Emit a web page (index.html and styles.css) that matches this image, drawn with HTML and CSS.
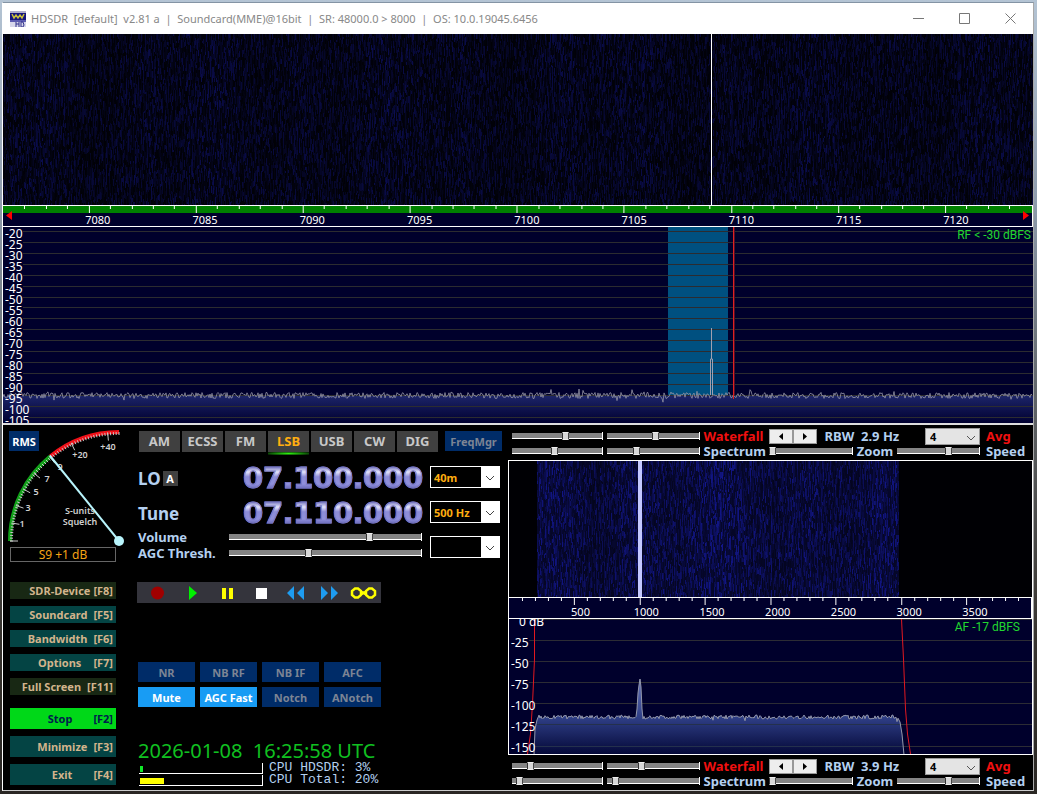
FILE: index.html
```html
<!DOCTYPE html>
<html lang="en">
<head>
<meta charset="utf-8">
<title>HDSDR</title>
<link rel="stylesheet" href="styles.css">
</head>
<body>
<div class="window">
  <header class="titlebar">
    <svg class="app-icon" width="16" height="16" viewBox="0 0 16 16" aria-hidden="true">
      <rect width="16" height="16" fill="#15157c"/><rect width="16" height="2" fill="#b0b0cc"/><rect y="10" width="16" height="6" fill="#d6d6ea"/><path d="M0 9h16v2H0z" fill="#5b5bb0"/>
      <path d="M2 3l2 4 2-3 2 3 2-3 2 3 2-4" fill="none" stroke="#c8c03c" stroke-width="1.5"/><path d="M6 11v5M9 11v5M6 13h3M11 11v5h2l1-2-1-3z" fill="none" stroke="#30308c"/>
    </svg>
    <h1>HDSDR&nbsp; [default]&nbsp; v2.81 a&nbsp; |&nbsp; Soundcard(MME)@16bit&nbsp; |&nbsp; SR: 48000.0 &gt; 8000&nbsp; |&nbsp; OS: 10.0.19045.6456</h1>
    <div class="caption">
      <button aria-label="Minimize window"><svg width="11" height="11" viewBox="0 0 11 11"><path d="M0 5.500h11" stroke="#777"/></svg></button>
      <button aria-label="Maximize window"><svg width="11" height="11" viewBox="0 0 11 11"><path d="M.5.5h10v10H.5z" fill="none" stroke="#777"/></svg></button>
      <button aria-label="Close window"><svg width="11" height="11" viewBox="0 0 11 11"><path d="M.5.5l10 10M10.500.5l-10 10" stroke="#777"/></svg></button>
    </div>
  </header>

  <canvas class="rf-waterfall" id="rfWaterfall" width="1030" height="171"></canvas>

  <div class="rf-scale">
    <svg class="rf-ticks" id="rfTicks" viewBox="0 0 1030 8" preserveAspectRatio="none"></svg>
    <div class="rf-freqs">
      <svg class="edge left" width="6" height="9" viewBox="0 0 6 9"><path d="M6 0v9L0 4.500z" fill="#f00"/></svg>
      <span>7080</span><span>7085</span><span>7090</span><span>7095</span><span>7100</span><span>7105</span><span>7110</span><span>7115</span><span>7120</span>
      <svg class="edge right" width="6" height="9" viewBox="0 0 6 9"><path d="M0 0v9l6-4.500z" fill="#f00"/></svg>
    </div>
  </div>

  <section class="rf-spectrum plot">
    <svg id="rfPlot" viewBox="0 0 1030 196" preserveAspectRatio="none"></svg>
    <div class="db-labels"><span>-20</span><span>-25</span><span>-30</span><span>-35</span><span>-40</span><span>-45</span><span>-50</span><span>-55</span><span>-60</span><span>-65</span><span>-70</span><span>-75</span><span>-80</span><span>-85</span><span>-90</span><span>-95</span><span>-100</span><span>-105</span></div>
    <p class="level">RF &lt; -30 dBFS</p>
  </section>

  <main class="panel">
    <aside class="side">
      <div class="meter">
        <svg id="meter" width="122" height="119" viewBox="0 0 122 119" role="img" aria-label="Signal meter"></svg>
        <button class="rms">RMS</button>
      </div>
      <output class="signal">S9 +1 dB</output>
      <nav class="menu">
        <button class="dark"><span>SDR-Device</span><span>[F8]</span></button>
        <button><span>Soundcard</span><span>[F5]</span></button>
        <button><span>Bandwidth</span><span>[F6]</span></button>
        <button class="mid"><span>Options</span><span>[F7]</span></button>
        <button class="dark"><span>Full Screen</span><span>[F11]</span></button>
      </nav>
      <nav class="menu tall">
        <button class="stop"><span>Stop</span><span>[F2]</span></button>
        <button><span>Minimize</span><span>[F3]</span></button>
        <button class="exit"><span>Exit</span><span>[F4]</span></button>
      </nav>
    </aside>

    <section class="tuner">
      <div class="modes">
        <button>AM</button><button>ECSS</button><button>FM</button><button class="on">LSB</button><button>USB</button><button>CW</button><button>DIG</button>
        <button class="freqmgr">FreqMgr</button>
      </div>
      <div class="freq-row">
        <span class="name">LO<button class="badge">A</button></span>
        <output class="digits" aria-label="LO frequency"><span>0</span><span>7</span><span class="dot">.</span><span>1</span><span>0</span><span>0</span><span class="dot">.</span><span>0</span><span>0</span><span>0</span></output>
        <span class="pick"><select aria-label="Band"><option>40m</option></select><svg width="10" height="6" viewBox="0 0 10 6"><path d="M1 1l4 4 4-4" fill="none" stroke="#444"/></svg></span>
      </div>
      <div class="freq-row">
        <span class="name">Tune</span>
        <output class="digits" aria-label="Tune frequency"><span>0</span><span>7</span><span class="dot">.</span><span>1</span><span>1</span><span>0</span><span class="dot">.</span><span>0</span><span>0</span><span>0</span></output>
        <span class="pick"><select aria-label="Step"><option>500 Hz</option></select><svg width="10" height="6" viewBox="0 0 10 6"><path d="M1 1l4 4 4-4" fill="none" stroke="#444"/></svg></span>
      </div>
      <div class="levels">
        <div class="sliders">
          <label for="vol">Volume</label><input id="vol" type="range" value="74">
          <label for="agc">AGC Thresh.</label><input id="agc" type="range" value="41">
        </div>
        <span class="pick"><select aria-label="Preset"><option></option></select><svg width="10" height="6" viewBox="0 0 10 6"><path d="M1 1l4 4 4-4" fill="none" stroke="#444"/></svg></span>
      </div>
      <div class="transport">
        <button aria-label="Record"><svg width="28" height="20" viewBox="0 0 28 20"><circle cx="13.500" cy="10" r="6.500" fill="#a00000"/></svg></button>
        <button aria-label="Play"><svg width="28" height="20" viewBox="0 0 28 20"><path d="M11 3l8 7-8 7z" fill="#00f000"/></svg></button>
        <button aria-label="Pause"><svg width="28" height="20" viewBox="0 0 28 20"><path d="M9 5h4v11H9zM16 5h4v11h-4z" fill="#ff0"/></svg></button>
        <button aria-label="Stop playback"><svg width="28" height="20" viewBox="0 0 28 20"><path d="M9 5h11v11H9z" fill="#fff"/></svg></button>
        <button aria-label="Rewind"><svg width="28" height="20" viewBox="0 0 28 20"><path d="M13 3v14l-7-7zM23 3v14l-7-7z" fill="#1e9cf0"/></svg></button>
        <button aria-label="Forward"><svg width="28" height="20" viewBox="0 0 28 20"><path d="M5 3v14l7-7zM15 3v14l7-7z" fill="#1e9cf0"/></svg></button>
        <button aria-label="Loop"><svg width="28" height="20" viewBox="0 0 28 20"><path d="M5 5.500h3l3 2.500v4l-3 2.500H5L2 12V8zM19 5.500h3l3 2.500v4l-3 2.500h-3L16 12V8zM11 8.500l5 3M11 11.500l5-3" fill="none" stroke="#ff0" stroke-width="2.500"/></svg></button>
      </div>
      <div class="dsp">
        <button>NR</button><button>NB RF</button><button>NB IF</button><button>AFC</button>
        <button class="on">Mute</button><button class="on">AGC Fast</button><button>Notch</button><button>ANotch</button>
      </div>
      <time class="clock">2026-01-08&nbsp; 16:25:58 UTC</time>
      <div class="cpu"><div class="bar"><i class="own"></i></div><span>CPU HDSDR: 3%</span></div>
      <div class="cpu"><div class="bar"><i class="total"></i></div><span>CPU Total: 20%</span></div>
    </section>

    <section class="audio">
      <div class="view-controls">
        <input type="range" aria-label="RF waterfall low" value="60"><input type="range" aria-label="RF waterfall high" value="53"><span class="red">Waterfall</span>
        <div class="rbw"><button aria-label="Narrower"><svg width="4" height="7" viewBox="0 0 4 7"><path d="M4 0v7L0 3.500z"/></svg></button><button aria-label="Wider"><svg width="4" height="7" viewBox="0 0 4 7"><path d="M0 0v7l4-3.500z"/></svg></button><span>RBW&nbsp; 2.9 Hz</span></div>
        <span class="avg"><select id="avg1"><option>4</option></select><svg width="10" height="6" viewBox="0 0 10 6"><path d="M1 1l4 4 4-4" fill="none" stroke="#555"/></svg></span><label class="red" for="avg1">Avg</label>
        <input type="range" aria-label="RF spectrum low" value="47"><input type="range" aria-label="RF spectrum high" value="31"><span>Spectrum</span>
        <input id="zoom1" type="range" value="0"><label for="zoom1">Zoom</label><input id="speed1" type="range" value="64"><label for="speed1">Speed</label>
      </div>
      <div class="af-view">
        <canvas class="af-waterfall" id="afWaterfall" width="523" height="136"></canvas>
        <div class="af-scale">
          <svg id="afTicks" viewBox="0 0 523 8" preserveAspectRatio="none"></svg>
          <div class="af-freqs"><span>500</span><span>1000</span><span>1500</span><span>2000</span><span>2500</span><span>3000</span><span>3500</span></div>
        </div>
        <div class="af-spectrum plot">
          <svg id="afPlot" viewBox="0 0 523 135" preserveAspectRatio="none"></svg>
          <div class="db-labels"><span class="zero">0 dB</span><span>-25</span><span>-50</span><span>-75</span><span>-100</span><span>-125</span><span>-150</span></div>
          <p class="level">AF -17 dBFS</p>
        </div>
      </div>
      <div class="view-controls">
        <input type="range" aria-label="AF waterfall low" value="18"><input type="range" aria-label="AF waterfall high" value="36"><span class="red">Waterfall</span>
        <div class="rbw"><button aria-label="Narrower"><svg width="4" height="7" viewBox="0 0 4 7"><path d="M4 0v7L0 3.500z"/></svg></button><button aria-label="Wider"><svg width="4" height="7" viewBox="0 0 4 7"><path d="M0 0v7l4-3.500z"/></svg></button><span>RBW&nbsp; 3.9 Hz</span></div>
        <span class="avg"><select id="avg2"><option>4</option></select><svg width="10" height="6" viewBox="0 0 10 6"><path d="M1 1l4 4 4-4" fill="none" stroke="#555"/></svg></span><label class="red" for="avg2">Avg</label>
        <input type="range" aria-label="AF spectrum low" value="5"><input type="range" aria-label="AF spectrum high" value="6"><span>Spectrum</span>
        <input id="zoom2" type="range" value="0"><label for="zoom2">Zoom</label><input id="speed2" type="range" value="64"><label for="speed2">Speed</label>
      </div>
    </section>
  </main>
</div>
<script src="script.js"></script>
</body>
</html>
```
FILE: styles.css
```css
* { box-sizing: border-box; }
body {
  margin: 0;
  min-height: 100vh;
  display: flex;
  padding: 2px 3px 3px 2px;
  font: 11px/1 "Noto Sans", "Open Sans", sans-serif;
  background: linear-gradient(#b4c4d4, #8f9cac 25%, #606468 50%, #38342f 80%, #2a2724);
}
button, select { font: inherit; border: 0; padding: 0; margin: 0; border-radius: 0; color: inherit; }
p, h1 { margin: 0; font-weight: normal; }
svg { display: block; }
.window {
  flex: 1;
  min-width: 0;
  display: flex;
  flex-direction: column;
  background: #000;
  border: 1px solid #ccc;
  border-top-color: #8494a4;
  border-left-color: #fff;
  border-right-color: #a8a8a8;
}
.titlebar {
  height: 31px;
  flex: none;
  background: #fff;
  display: flex;
  align-items: center;
  padding-left: 7px;
}
.titlebar h1 { font-size: 11px; line-height: 16px; color: #888; margin-left: 5px; flex: 1; white-space: nowrap; }
.caption { display: flex; }
.caption button { width: 46px; height: 30px; background: none; display: grid; place-items: center; }
.rf-waterfall { display: block; width: 100%; flex: 1 1 171px; height: 171px; min-height: 0; }

.rf-scale { height: 22px; flex: none; border: 1px solid #fff; border-left: 0; background: #00002c; }
.rf-ticks { width: 100%; height: 8px; }
.rf-freqs { display: flex; position: relative; padding-left: 4%; height: 12px; line-height: 11px; color: #fff; }
.rf-freqs span { flex: 0 0 10.86%; text-align: center; }
.edge { position: absolute; top: -3px; }
.edge.left { left: 3px; }
.edge.right { right: 3px; }

.plot { position: relative; overflow: hidden; background: #00002c; color: #fff; }
.plot > svg { width: 100%; height: 100%; position: absolute; inset: 0; }
.db-labels { position: relative; display: flex; flex-direction: column; font-size: 12px; }
.level { position: absolute; color: #20d830; font: 12px/14px Roboto, "Noto Sans", sans-serif; }
.rf-spectrum { height: 198px; flex: none; border-bottom: 2px solid #ddd; }
.rf-spectrum .db-labels { padding: 1px 0 0 2px; line-height: 11px; }
.rf-spectrum .level { right: 2px; top: 1px; }

.panel { display: flex; flex: none; height: 365px; }
.side { width: 134px; flex: none; }
.meter { position: relative; height: 122px; }
.meter svg { position: absolute; left: 0; top: 3px; }
.rms { position: absolute; left: 6px; top: 6px; width: 30px; height: 20px; background: #002c68; color: #fff; font-weight: bold; }
.signal { display: block; width: 106px; height: 15px; margin-left: 7px; border: 1px solid #666; color: #f5a416; text-align: center; font-size: 12px; line-height: 14px; }
.menu { display: flex; flex-direction: column; gap: 7px; margin: 20px 0 0 7px; width: 106px; font-weight: bold; color: #d2b48c; }
.menu button { height: 17px; background: #044444; display: flex; justify-content: flex-end; align-items: center; gap: 6px; padding-right: 3px; }
.menu button.dark { background: #182814; }
.menu button.dark:first-child { gap: 3px; }
.menu button.mid { gap: 12px; }
.menu.tall { margin-top: 13px; }
.menu.tall button { height: 21px; }
.menu button.stop { background: #00d818; color: #00204c; gap: 21px; }
.menu button.exit { gap: 21px; }

.tuner { width: 371px; flex: none; padding: 6px 8px 0 1px; color: #b4d0f0; }
.modes { display: flex; gap: 2px; padding-left: 1px; height: 35px; }
.modes button { flex: none; width: 41px; height: 21px; background: #404040; color: #c8c8c8; font-size: 13px; font-weight: bold; position: relative; }
.modes .on { color: #ffae10; }
.modes .on::after { content: ""; position: absolute; left: 0; right: 0; top: 21px; height: 3px; background: radial-gradient(ellipse at center, #30f010, #106008 60%, #000); }
.modes .freqmgr { margin-left: 5px; width: 57px; height: 20px; background: #002c68; color: #7c8494; font-size: 11px; }
.freq-row { display: flex; align-items: flex-start; height: 35px; }
.name { width: 105px; font-size: 17px; font-weight: bold; display: flex; align-items: center; gap: 2px; height: 24px; }
.badge { width: 15px; height: 15px; background: #404040; color: #fff; font-size: 11px; font-weight: bold; }
.digits { display: flex; flex: 1; font: bold 29px/24px "DejaVu Sans", sans-serif; color: transparent; -webkit-text-stroke: 1px #7878c4; background: linear-gradient(#6464b4 0, #e4e4fc 25%, #8c8cd8 45%, #9090dc 75%, #6868b8 95%); background-clip: text; -webkit-background-clip: text; }
.digits span { width: 20px; display: flex; justify-content: center; }
.digits .dot { width: 10px; }
.pick { width: 70px; height: 22px; position: relative; flex: none; }
.pick select { appearance: none; width: 100%; height: 100%; border: 1px solid #fff; border-right-width: 19px; background: #000; color: #ffae10; font-weight: bold; padding-left: 3px; }
.pick svg { position: absolute; right: 5px; top: 9px; pointer-events: none; }
.levels { display: flex; height: 46px; font-size: 13px; font-weight: bold; }
.levels select { font-size: 11px; }
.sliders { flex: 1; display: grid; grid-template-columns: 91px 193px; grid-auto-rows: 16px; align-items: center; margin-top: -7px; }
input[type="range"] { appearance: none; -webkit-appearance: none; width: 100%; min-width: 0; height: 8px; margin: 0; background: linear-gradient(#000 1px, #848484 1px, #848484 6px, #fff 6px, #fff 7px, #000 7px); border-right: 1px solid #fff; }
input[type="range"]::-webkit-slider-thumb { -webkit-appearance: none; width: 7px; height: 8px; background: #d8d8d8; border: 1px solid #eee; border-right-color: #444; border-left-color: #333; }
.transport { width: 244px; height: 21px; background: #34343c; margin-left: -1px; display: flex; justify-content: space-between; padding: 0 3px 0 7px; }
.transport button { background: none; }
.dsp { display: grid; grid-template-columns: repeat(4, 57px); gap: 5px; margin-top: 59px; }
.dsp button { height: 20px; background: #002c68; color: #7c8494; font-weight: bold; }
.dsp .on { background: #189cf4; color: #fff; }
.clock { display: block; font-size: 20px; line-height: 24px; color: #10c020; margin: 32px 0 -1px; white-space: nowrap; }
.cpu { display: flex; align-items: center; gap: 6px; height: 12px; font: 13px/12px "Liberation Mono", monospace; }
.bar { width: 124px; height: 11px; margin-left: 1px; border: solid #fff; border-width: 0 1px 1px 0; padding: 3px 0 1px 1px; }
.bar i { display: block; height: 6px; }
.own { width: 3px; background: #10e828; }
.total { width: 24px; background: #ff0; }

.audio { flex: 1; min-width: 0; font-size: 13px; font-weight: bold; color: #b4d0f0; }
.view-controls { display: grid; grid-template-columns: 91fr 92fr 61px 84fr 36px 83fr 42px; column-gap: 4px; grid-template-rows: 18px 12px; align-items: center; padding: 2px 7px 0 4px; height: 35px; white-space: nowrap; }
.view-controls .red { color: #f01010; }
.view-controls label:last-child, .view-controls .avg + label { margin-left: 2px; }
.rbw { grid-column: span 2; display: flex; align-items: center; min-width: 0; }
.rbw button { flex: none; width: 24px; height: 15px; background: #eee; border: 1px solid #999; display: grid; place-items: center; }
.rbw span { margin-left: 8px; }
.avg { width: 55px; height: 17px; position: relative; justify-self: end; }
.avg select { appearance: none; width: 100%; height: 100%; background: #e4e4e4; border: 1px solid #999; color: #000; font-size: 11px; font-weight: bold; padding-left: 4px; line-height: 13px; display: block; }
.avg svg { position: absolute; right: 4px; top: 7px; pointer-events: none; }
.af-view { border: 1px solid #fff; font-size: 11px; font-weight: normal; color: #fff; }
.af-waterfall { display: block; width: 100%; height: 136px; }
.af-scale { height: 22px; border: 1px solid #fff; border-left: 0; background: #00002c; }
.af-scale svg { width: 100%; height: 8px; }
.af-freqs { display: flex; padding-left: 7.4%; line-height: 12px; }
.af-freqs span { flex: 0 0 13.6%; text-align: center; }
.af-spectrum { height: 135px; }
.af-spectrum .db-labels { line-height: 21px; padding-left: 2px; margin-top: -8px; }
.af-spectrum .zero { padding-left: 8px; }
.af-spectrum .level { right: 12px; top: 1px; }
```
FILE: script.js
```js
let seed = 20260108;
function rnd() {
  seed = (seed * 1664525 + 1013904223) >>> 0;
  return seed / 4294967296;
}

function waterfall(id, from, to, strength, base, marker, markerWidth, markerColor) {
  const c = document.getElementById(id);
  const g = c.getContext('2d');
  g.fillStyle = '#000004';
  g.fillRect(0, 0, c.width, c.height);
  for (let x = from; x < to; x++) {
    const col = 0.85 + 0.15 * Math.sin(x / 47) * Math.sin(x / 19) + rnd() * 0.15;
    let y = 0;
    while (y < c.height) {
      const h = 2 + Math.floor(rnd() * 7);
      const v = (base + Math.pow(rnd(), 2) * strength) * col;
      g.fillStyle = `rgb(${v * 0.13},${v * 0.16},${v})`;
      g.fillRect(x, y, 1, h);
      y += h;
    }
  }
  g.fillStyle = markerColor;
  g.fillRect(marker, 0, markerWidth, c.height);
}
waterfall('rfWaterfall', 0, 1030, 64, 8, 708, 1, '#fff');
waterfall('afWaterfall', 28, 390, 90, 38, 129, 4, '#c4c8ff');

function ticks(id, start, step, count, major, offset, extra) {
  let d = '';
  for (let i = 0; i < count; i++) {
    const x = Math.round(start + i * step) + 0.5;
    d += `M${x} 0v${(i + offset) % major === 0 ? 7 : 3}`;
  }
  document.getElementById(id).innerHTML = extra + `<path d="${d}" stroke="#fff" fill="none"/>`;
}
ticks('rfTicks', 21.4, 21.43, 47, 5, 2, '<rect width="1030" height="7" fill="#008000"/>');
ticks('afTicks', 12.6, 13.1, 39, 5, 1, '');

function noise(from, to, mid, amp) {
  const pts = [];
  for (let x = from; x <= to; x++) {
    const spike = rnd() > 0.96 ? (rnd() - 0.5) * amp * 1.6 : 0;
    pts.push(`${x},${(mid + (rnd() - 0.5) * amp + spike).toFixed(1)}`);
  }
  return pts.join(' ');
}

const rfGrid = Array.from({ length: 18 }, (_, i) =>
  `M${i > 15 ? 26 : 20} ${Math.round(4 + i * 10.92) + 0.5}H1030`).join('');
document.getElementById('rfPlot').innerHTML = `
  <defs><linearGradient id="rfFill" x1="0" x2="0" y1="0" y2="1"><stop stop-color="#1c2468"/><stop offset="1" stop-color="#000030"/></linearGradient></defs>
  <rect y="169" width="1030" height="27" fill="url(#rfFill)"/>
  <rect x="665" width="60" height="168" fill="#005080"/>
  <path d="${rfGrid}" stroke="#2c2c30"/>
  <polyline points="${noise(0, 1029, 168.5, 6)}" fill="none" stroke="#9494a4" stroke-width="0.8"/>
  <path d="M707.5 168v-36h1v-31v31h1v36" fill="none" stroke="#a0a0b0"/>
  <rect x="730" width="1" height="172" fill="#e02020"/><rect x="731" width="1" height="168" fill="#501028"/>`;

const afGrid = [0, 21, 42, 63, 84, 105, 127].map((y, i) => `M${i > 3 ? 26 : 20} ${y + 0.5}H523`).join('');
const left = noise(30, 127, 98, 4);
const right = noise(134, 389, 98, 4);
const shape = `25,136 26,110 28,101 ${left} 128,90 129,74 130,66 131,60 132,68 133,90 ${right} 391,103 393,115 395,136`;
document.getElementById('afPlot').innerHTML = `
  <defs><linearGradient id="afFill" gradientUnits="userSpaceOnUse" x1="0" x2="0" y1="60" y2="135"><stop stop-color="#6674b8"/><stop offset=".5" stop-color="#304088"/><stop offset="1" stop-color="#040838"/></linearGradient></defs>
  <path d="${afGrid}" stroke="#2c2c34"/>
  <polygon points="${shape}" fill="url(#afFill)"/>
  <path d="M26 105.5H392M26 127.5H394" stroke="#24304c"/>
  <polyline points="${shape}" fill="none" stroke="#9498ac"/>
  <path d="M25.500 0v40l-2 45-2 30-3 20M392.500 0l2 40 2 50 2 25 3 20" fill="none" stroke="#e01820"/>`;

const cx = 116, cy = 113;
function polar(deg, r) {
  const a = deg * Math.PI / 180;
  return [(cx - Math.cos(a) * r).toFixed(1), (cy - Math.sin(a) * r).toFixed(1)];
}
function arc(a, b, r) {
  return `M${polar(a, r)} A${r} ${r} 0 0 1 ${polar(b, r)}`;
}
let marks = '';
for (let a = 0; a <= 90; a += 1.5) marks += `M${polar(a, 106)}L${polar(a, 109)}`;
for (const a of [0, 9.5, 19, 28.5, 38.5, 50.5, 64, 84]) marks += `M${polar(a, 101)}L${polar(a, 109)}`;
const names = [['1', 19, 99], ['3', 25, 83], ['5', 33, 67], ['7', 44, 54], ['9', 57, 42], ['+20', 77, 30], ['+40', 105, 22]];
document.getElementById('meter').innerHTML = `
  <path d="${arc(0, 51, 109)}" stroke="#10a018" stroke-width="4" fill="none"/>
  <path d="${arc(51, 90, 109)}" stroke="#f01018" stroke-width="4" fill="none"/>
  <path d="${marks}" stroke="#c8c8c8" stroke-width="1"/>
  <g fill="#d0d0d0" font-family="Noto Sans, sans-serif" font-size="9" font-weight="600" text-anchor="middle">
  ${names.map(n => `<text x="${n[1]}" y="${n[2]}">${n[0]}</text>`).join('')}
  <text x="77" y="86">S-units</text><text x="77" y="97">Squelch</text></g>
  <path d="M${cx} ${cy}L${polar(51, 110)}" stroke="#b8f4fc" stroke-width="2"/>
  <circle cx="${cx}" cy="${cy}" r="5" fill="#b8f4fc"/>`;
```
